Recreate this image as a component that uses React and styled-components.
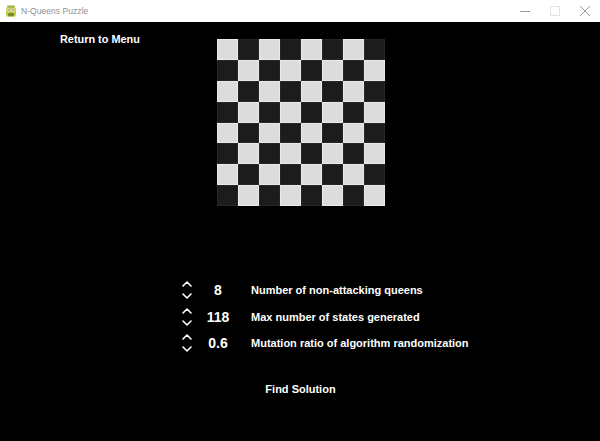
import React from 'react';
import styled, { createGlobalStyle } from 'styled-components';

const Global = createGlobalStyle`
  html, body {
    margin: 0;
    padding: 0;
    background: #000;
  }
  body {
    font-family: "Liberation Sans", Arial, sans-serif;
  }
`;

const Window = styled.div`
  width: 600px;
  height: 441px;
  display: flex;
  flex-direction: column;
  background: #000;
  overflow: hidden;
`;

const TitleBar = styled.div`
  height: 22px;
  flex: none;
  background: #fff;
  display: flex;
  align-items: center;
  padding-left: 5px;
  gap: 4px;
`;

const Title = styled.span`
  font-family: "Liberation Sans", Arial, sans-serif;
  font-size: 8.6px;
  color: #8f8f8f;
  flex: 1;
`;

const WinButtons = styled.div`
  display: flex;
  align-items: center;
  height: 100%;
`;

const WinButton = styled.div`
  width: 30px;
  height: 100%;
  display: flex;
  align-items: center;
  justify-content: center;
`;

const Content = styled.div`
  flex: 1;
  display: flex;
  flex-direction: column;
`;

const Top = styled.div`
  display: grid;
  grid-template-columns: 217px 168px 1fr;
  align-items: start;
  padding-top: 10px;
`;

const MenuLink = styled.div`
  padding-left: 60px;
  color: #fff;
  font-weight: bold;
  font-size: 10.9px;
  line-height: 14px;
`;

const Board = styled.div`
  display: grid;
  grid-template-columns: repeat(8, 1fr);
  grid-template-rows: repeat(8, 1fr);
  width: 168px;
  height: 167px;
  margin-top: 7px;
  background: #0a0a0a;
`;

const Cell = styled.div`
  background: ${(p) => (p.$light ? '#dcdcdc' : '#1c1c1c')};
  box-shadow: inset 0 0 0 1px ${(p) => (p.$light ? '#e9e9e9' : '#262626')};
`;

const Settings = styled.div`
  margin-top: 71px;
  padding-left: 180px;
  display: grid;
  grid-template-columns: 14px 46px auto;
  grid-auto-rows: 26.5px;
  align-items: center;
`;

const Stepper = styled.div`
  display: flex;
  flex-direction: column;
  align-items: center;
  gap: 6px;
`;

const Value = styled.div`
  color: #fff;
  font-weight: bold;
  font-size: 14px;
  text-align: center;
  padding-left: 2px;
`;

const Label = styled.div`
  color: #fff;
  font-weight: bold;
  font-size: 11px;
  padding-left: 11px;
`;

const Action = styled.div`
  margin-top: 26px;
  padding-left: 1px;
  text-align: center;
  color: #fff;
  font-weight: bold;
  font-size: 11px;
`;

const Chevron = ({ up }) => (
  <svg width="10" height="6" viewBox="0 0 10 6">
    <polyline
      points={up ? '1,5 5,1 9,5' : '1,1 5,5 9,1'}
      fill="none"
      stroke="#fff"
      strokeWidth="1.6"
      strokeLinecap="round"
      strokeLinejoin="round"
    />
  </svg>
);

const PygameIcon = () => (
  <svg width="12" height="13" viewBox="0 0 12 13">
    <rect x="1" y="2" width="10" height="10" rx="3" fill="#c8c84a" />
    <circle cx="4" cy="5" r="1.6" fill="#fff" />
    <circle cx="8" cy="5" r="1.6" fill="#fff" />
    <circle cx="4" cy="5" r="0.7" fill="#333" />
    <circle cx="8" cy="5" r="0.7" fill="#333" />
    <rect x="3" y="8" width="6" height="3" rx="1" fill="#6f8f2f" />
    <rect x="2" y="0.5" width="8" height="2" rx="1" fill="#9fb33f" />
  </svg>
);

const settings = [
  { value: '8', label: 'Number of non-attacking queens' },
  { value: '118', label: 'Max number of states generated' },
  { value: '0.6', label: 'Mutation ratio of algorithm randomization' },
];

export default function App() {
  const cells = [];
  for (let r = 0; r < 8; r++) {
    for (let c = 0; c < 8; c++) {
      cells.push(<Cell key={`${r}-${c}`} $light={(r + c) % 2 === 0} />);
    }
  }

  return (
    <>
      <Global />
      <Window>
        <TitleBar>
          <PygameIcon />
          <Title>N-Queens Puzzle</Title>
          <WinButtons>
            <WinButton>
              <svg width="10" height="10" viewBox="0 0 10 10">
                <line x1="0" y1="5.5" x2="10" y2="5.5" stroke="#999" strokeWidth="1" />
              </svg>
            </WinButton>
            <WinButton>
              <svg width="10" height="10" viewBox="0 0 10 10">
                <rect x="0.5" y="0.5" width="9" height="9" fill="none" stroke="#e2e2e2" strokeWidth="1" />
              </svg>
            </WinButton>
            <WinButton>
              <svg width="10" height="10" viewBox="0 0 10 10">
                <line x1="0" y1="0" x2="10" y2="10" stroke="#999" strokeWidth="1" />
                <line x1="10" y1="0" x2="0" y2="10" stroke="#999" strokeWidth="1" />
              </svg>
            </WinButton>
          </WinButtons>
        </TitleBar>
        <Content>
          <Top>
            <MenuLink>Return to Menu</MenuLink>
            <Board>{cells}</Board>
          </Top>
          <Settings>
            {settings.map((s) => (
              <React.Fragment key={s.label}>
                <Stepper>
                  <Chevron up />
                  <Chevron />
                </Stepper>
                <Value>{s.value}</Value>
                <Label>{s.label}</Label>
              </React.Fragment>
            ))}
          </Settings>
          <Action>Find Solution</Action>
        </Content>
      </Window>
    </>
  );
}
